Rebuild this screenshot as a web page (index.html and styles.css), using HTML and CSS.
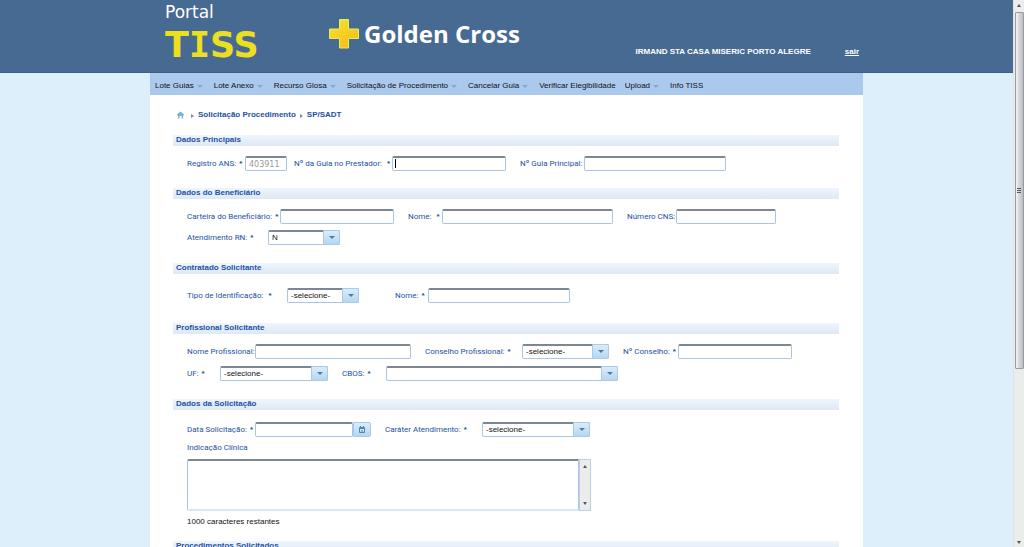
FILE: index.html
```html
<!DOCTYPE html>
<html lang="pt-BR">
<head>
<meta charset="utf-8">
<title>Portal TISS</title>
<link rel="stylesheet" href="styles.css">
</head>
<body>
<div class="viewport">
<header class="header">
  <div class="wrap header-in">
    <div class="portal"><span class="portal-top">Portal</span><span class="portal-name">T<span class="slab">I</span>SS</span></div>
    <div class="brand">
      <svg width="30" height="30" viewBox="0 0 30 30" aria-hidden="true">
        <defs><linearGradient id="gold" x1="0" y1="0" x2="0.7" y2="1"><stop offset="0" stop-color="#f0e63a"/><stop offset="0.5" stop-color="#f6d21f"/><stop offset="1" stop-color="#f2bd1c"/></linearGradient></defs>
        <path d="M10.500 0.500h9v9.500h10v9.500h-10v9.500h-9v-9.500h-10v-9.500h10z" fill="url(#gold)" stroke="#e6ee5c"/>
      </svg>
      <span class="brand-name">Golden Cross</span>
    </div>
    <div class="user"><span>IRMAND STA CASA MISERIC PORTO ALEGRE</span><a href="#">sair</a></div>
  </div>
</header>
<main class="wrap page">
  <nav class="menu">
    <a class="more" href="#">Lote Guias</a>
    <a class="more" href="#">Lote Anexo</a>
    <a class="more" href="#">Recurso Glosa</a>
    <a class="more" href="#">Solicitação de Procedimento</a>
    <a class="more" href="#">Cancelar Guia</a>
    <a href="#">Verificar Elegibilidade</a>
    <a class="more" href="#">Upload</a>
    <a href="#">Info TISS</a>
  </nav>
  <div class="content">
    <div class="crumbs">
      <a class="home" href="#" aria-label="Início"><svg width="7" height="8" viewBox="0 0 7 8"><path d="M0 3.500L3.500 0.500 7 3.500V4.500H6V7.500H4.500V5H2.500V7.500H1V4.500H0z" fill="#7fb2d2"/></svg></a>
      <i></i><a href="#">Solicitação Procedimento</a><i></i><a href="#">SP/SADT</a>
    </div>
    <form>
      <section>
        <h2>Dados Principais</h2>
        <div class="rows">
          <div class="row r-guia">
            <label for="ans">Registro ANS:<b>*</b></label><input id="ans" value="403911" disabled>
            <label class="near" for="guia">Nº da Guia no Prestador:<b class="far">*</b></label><span class="focus"><input id="guia"></span>
            <label for="principal">Nº Guia Principal:</label><input id="principal">
          </div>
        </div>
      </section>
      <section class="s-benef">
        <h2>Dados do Beneficiário</h2>
        <div class="rows">
          <div class="row r-carteira">
            <label for="carteira">Carteira do Beneficiário:<b>*</b></label><input id="carteira">
            <label for="nome">Nome:<b class="far">*</b></label><input id="nome">
            <label for="cns">Número CNS:</label><input id="cns">
          </div>
          <div class="row r-rn">
            <label for="rn">Atendimento RN:<b>*</b></label><span class="combo"><select id="rn"><option>N</option></select></span>
          </div>
        </div>
      </section>
      <section class="s-contr">
        <h2>Contratado Solicitante</h2>
        <div class="rows">
          <div class="row r-tipo">
            <label for="tipo">Tipo de Identificação:<b class="far">*</b></label><span class="combo"><select id="tipo"><option>-selecione-</option></select></span>
            <label class="wide" for="contr">Nome:<b>*</b></label><input id="contr">
          </div>
        </div>
      </section>
      <section class="s-prof">
        <h2>Profissional Solicitante</h2>
        <div class="rows">
          <div class="row r-prof">
            <label for="prof">Nome Profissional:</label><input id="prof">
            <label for="conselho">Conselho Profissional:<b>*</b></label><span class="combo"><select id="conselho"><option>-selecione-</option></select></span>
            <label for="nconselho">Nº Conselho:<b>*</b></label><input id="nconselho">
          </div>
          <div class="row r-uf">
            <label for="uf">UF:<b>*</b></label><span class="combo"><select id="uf"><option>-selecione-</option></select></span>
            <label for="cbos">CBOS:<b>*</b></label><span class="combo"><input id="cbos"></span>
          </div>
        </div>
      </section>
      <section class="s-solic">
        <h2>Dados da Solicitação</h2>
        <div class="rows">
          <div class="row r-data">
            <label for="data">Data Solicitação:<b>*</b></label>
            <span class="date"><input id="data"><button type="button" aria-label="Calendário"><svg width="6" height="7" viewBox="0 0 6 7"><path d="M0.500 1.500h5v5h-5zM0.500 2.500h5M1.500 0v1M4.500 0v1M3 4v2" fill="none" stroke="#4b86b4"/></svg></button></span>
            <label for="carater">Caráter Atendimento:<b>*</b></label><span class="combo"><select id="carater"><option>-selecione-</option></select></span>
          </div>
          <label class="line" for="indicacao">Indicação Clínica</label>
          <div class="area"><textarea id="indicacao"></textarea><div class="area-bar"><i class="up"></i><i class="down"></i></div></div>
          <p class="count">1000 caracteres restantes</p>
        </div>
      </section>
      <section>
        <h2>Procedimentos Solicitados</h2>
      </section>
    </form>
  </div>
</main>
</div>
<div class="scroll" aria-hidden="true"><i class="up"></i><div class="thumb"><u></u></div><i class="down"></i></div>
</body>
</html>
```
FILE: styles.css
```css
*, *::before, *::after { box-sizing: border-box; }
body {
  margin: 0;
  height: 100vh;
  display: flex;
  overflow: hidden;
  background: #dceffa;
  font: 8px/10px "Liberation Sans", Arial, sans-serif;
  color: #111;
}
a { color: inherit; text-decoration: none; }
.viewport { flex: 1; min-width: 0; overflow: hidden; }
.wrap { max-width: 713px; margin: 0 auto; }

.header { height: 73px; background: #476a92; border-bottom: 1px solid #3e5f86; color: #fff; }
.header-in { display: flex; padding: 2px 4px 0 15px; }
.portal { display: flex; flex-direction: column; width: 164px; font-family: "DejaVu Sans", Verdana, sans-serif; }
.portal-top { font-size: 17px; line-height: 20px; }
.portal-name { font-size: 35px; line-height: 46px; font-weight: bold; color: #ecdf1f; }
.slab { font-family: "DejaVu Sans Mono", monospace; }
.brand { display: flex; align-items: center; gap: 5px; height: 64px; }
.brand-name { font: bold 24px/32px "Open Sans", sans-serif; white-space: nowrap; }
.user { display: flex; gap: 34px; margin: 45px 0 0 auto; font-weight: bold; white-space: nowrap; }
.user a { text-decoration: underline; }

.page { background: #fff; min-height: calc(100vh - 73px); }
.menu { display: flex; align-items: center; gap: 9px; height: 22px; padding: 3px 5px 0; background: #abc9ed; white-space: nowrap; }
.menu a { display: flex; align-items: center; }
.more::after { content: ""; margin: 1px 2px 0 3px; border: 3px solid transparent; border-top-color: #84a9c9; border-bottom: 0; }

.content { padding: 15px 24px 0 23px; }
.crumbs { display: flex; align-items: center; height: 10px; padding-left: 4px; margin-bottom: 15px; font-weight: bold; color: #2350a5; }
.crumbs svg { display: block; }
.crumbs .home { margin-right: 3px; }
.crumbs i { margin: 1px 4px 0 4px; border: 2px solid transparent; border-left: 3px solid #6a90b8; border-right: 0; }

h2 {
  margin: 0;
  padding-left: 3px;
  height: 11px;
  font-size: 8px;
  line-height: 10px;
  color: #2350a5;
  background: linear-gradient(#eff5fc, #dde9f5);
}
.rows { display: flex; flex-direction: column; gap: 6px; padding: 10px 0 17px 14px; }
.s-benef .rows { padding-bottom: 18px; }
.s-contr .rows { padding: 14px 0 20px 14px; }
.s-prof .rows { gap: 7px; padding-bottom: 18px; }
.s-solic .rows { padding-top: 12px; padding-bottom: 14px; }
.row { display: grid; align-items: center; }
.r-guia { grid-template-columns: 58px 42px 105px 114px 78px 142px; }
.r-carteira { grid-template-columns: 93px 114px 48px 171px 63px 100px; }
.r-rn { grid-template-columns: 81px 72px; }
.r-tipo { grid-template-columns: 100px 72px 69px 142px; }
.r-prof { grid-template-columns: 68px 156px 111px 87px 69px 114px; }
.r-uf { grid-template-columns: 33px 108px 58px 232px; }
.r-data { grid-template-columns: 68px 116px 111px 108px; }

label { font: 8px/10px Roboto, Tahoma, sans-serif; color: #2350a5; white-space: nowrap; }
.row label { padding-left: 14px; }
.row label:first-child { padding-left: 0; }
.row .near { padding-left: 7px; }
.row .wide { padding-left: 36px; }
label b { margin-left: 3px; font-family: "Liberation Sans", Arial, sans-serif; }
label .far { margin-left: 5px; }

input, select, textarea {
  display: block;
  width: 100%;
  min-width: 0;
  height: 15px;
  margin: 0;
  padding: 0 3px;
  border: 1px solid #a9c5e0;
  border-top: 2px solid #7e8692;
  border-radius: 2px;
  background: #fff;
  color: #111;
  font: 8px/10px "Liberation Sans", Arial, sans-serif;
  appearance: none;
  outline: 0;
}
input:disabled { color: #999; font-family: "DejaVu Sans", Verdana, sans-serif; }
.focus { position: relative; }
.focus::after { content: ""; position: absolute; left: 3px; top: 3px; width: 1px; height: 9px; background: #000; }
.combo { position: relative; }
.combo::before, .combo::after { content: ""; position: absolute; pointer-events: none; z-index: 1; }
.combo::before { right: 0; top: 0; width: 17px; height: 15px; border: 1px solid #a9cbe8; border-radius: 0 2px 2px 0; background: linear-gradient(#dcecf9, #b5d6f2); }
.combo::after { right: 5px; top: 6px; z-index: 2; border: 3px solid transparent; border-top-color: #4580ad; border-bottom: 0; }
.date { display: flex; }
.date button { flex: none; width: 18px; height: 15px; padding: 0; display: flex; align-items: center; justify-content: center; border: 1px solid #a9cbe8; border-radius: 0 2px 2px 0; background: linear-gradient(#dcecf9, #b5d6f2); }
.area { display: flex; width: 404px; }
textarea { height: 52px; resize: none; border-radius: 2px 0 0 2px; border-bottom: 2px solid #dbe8f3; }
.area-bar, .scroll { display: flex; flex-direction: column; justify-content: space-between; align-items: center; background: #ececec; }
.area-bar { flex: none; width: 12px; padding: 5px 0; border: 1px solid #b9d0e6; }
.up, .down { border: 2px solid transparent; }
.up { border-top: 0; border-bottom: 3px solid #555; }
.down { border-bottom: 0; border-top: 3px solid #555; }
.count { margin: 0; }

.scroll { flex: none; width: 11px; padding: 4px 0 3px; border-left: 1px solid #e2e2e2; }
.scroll .thumb { width: 9px; height: 357px; margin: 5px 0 auto; display: flex; align-items: center; justify-content: center; border: 1px solid #9a9a9f; border-radius: 1px; background: linear-gradient(90deg, #f4f4f5, #d4d4d8 50%, #bcbcc2); }
.thumb u { width: 4px; height: 5px; background: repeating-linear-gradient(#555 0 1px, transparent 1px 2px); }
```
